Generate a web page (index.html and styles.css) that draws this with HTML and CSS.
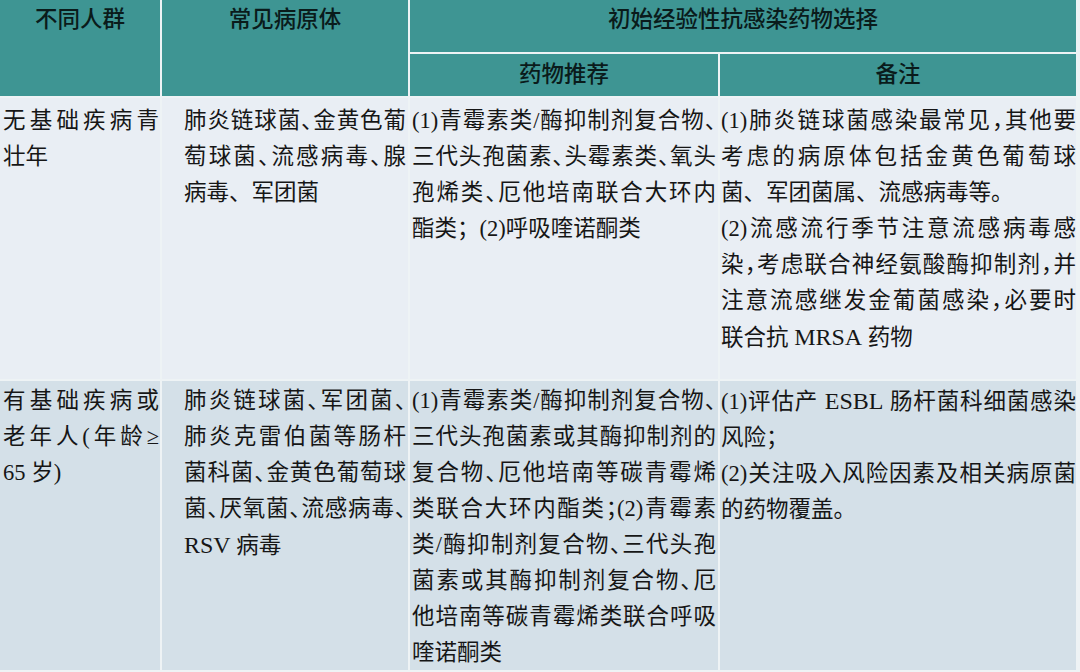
FILE: index.html
```html
<!DOCTYPE html>
<html lang="zh-CN">
<head>
<meta charset="utf-8">
<title>初始经验性抗感染药物选择</title>
<link rel="stylesheet" href="styles.css">
</head>
<body>
<div class="table">
  <div class="cell head h-tall">不同人群</div>
  <div class="cell head h-tall">常见病原体</div>
  <div class="cell head h-wide">初始经验性抗感染药物选择</div>
  <div class="cell head h-sub">药物推荐</div>
  <div class="cell head h-sub">备注</div>

  <div class="cell body r1 c1">
    <div class="l">无基础疾病青</div>
    <div class="l e">壮年</div>
  </div>
  <div class="cell body r1 c2">
    <div class="l">肺炎链球菌、金黄色葡</div>
    <div class="l">萄球菌、流感病毒、腺</div>
    <div class="l e">病毒、军团菌</div>
  </div>
  <div class="cell body r1 c3">
    <div class="l">(1)青霉素类/酶抑制剂复合物、</div>
    <div class="l">三代头孢菌素、头霉素类、氧头</div>
    <div class="l">孢烯类、厄他培南联合大环内</div>
    <div class="l e">酯类；(2)呼吸喹诺酮类</div>
  </div>
  <div class="cell body r1 c4">
    <div class="l">(1)肺炎链球菌感染最常见，其他要</div>
    <div class="l">考虑的病原体包括金黄色葡萄球</div>
    <div class="l e">菌、军团菌属、流感病毒等。</div>
    <div class="l">(2)流感流行季节注意流感病毒感</div>
    <div class="l">染，考虑联合神经氨酸酶抑制剂，并</div>
    <div class="l">注意流感继发金葡菌感染，必要时</div>
    <div class="l e">联合抗 <span class="lat">MRSA</span> 药物</div>
  </div>

  <div class="cell body r2 c1">
    <div class="l">有基础疾病或</div>
    <div class="l">老年人(年龄≥</div>
    <div class="l e">65 岁)</div>
  </div>
  <div class="cell body r2 c2">
    <div class="l">肺炎链球菌、军团菌、</div>
    <div class="l">肺炎克雷伯菌等肠杆</div>
    <div class="l">菌科菌、金黄色葡萄球</div>
    <div class="l">菌、厌氧菌、流感病毒、</div>
    <div class="l e"><span class="lat">RSV</span> 病毒</div>
  </div>
  <div class="cell body r2 c3">
    <div class="l">(1)青霉素类/酶抑制剂复合物、</div>
    <div class="l">三代头孢菌素或其酶抑制剂的</div>
    <div class="l">复合物、厄他培南等碳青霉烯</div>
    <div class="l">类联合大环内酯类；(2)青霉素</div>
    <div class="l">类/酶抑制剂复合物、三代头孢</div>
    <div class="l">菌素或其酶抑制剂复合物、厄</div>
    <div class="l">他培南等碳青霉烯类联合呼吸</div>
    <div class="l e">喹诺酮类</div>
  </div>
  <div class="cell body r2 c4">
    <div class="l">(1)评估产 <span class="lat">ESBL</span> 肠杆菌科细菌感染</div>
    <div class="l e">风险；</div>
    <div class="l">(2)关注吸入风险因素及相关病原菌</div>
    <div class="l e">的药物覆盖。</div>
  </div>
</div>
</body>
</html>
```

FILE: styles.css
```css
* {
  box-sizing: border-box;
}

html,
body {
  margin: 0;
  padding: 0;
}

body {
  width: 1080px;
  height: 672px;
  overflow: hidden;
  background: #eef3f5;
  font-family: "Liberation Serif", "Noto Sans CJK SC", serif;
  font-size: 22.5px;
  color: #161616;
}

.table {
  display: grid;
  grid-template-columns: 160px 246px 308px 356px;
  grid-template-rows: 52px 42px 281px 289px;
  gap: 2px;
}

.head {
  background: #3e9593;
  color: #0a1b1b;
  font-weight: 500;
  text-align: center;
  line-height: 36px;
}

.h-tall {
  grid-row: span 2;
  padding-top: 2px;
}

.h-wide {
  grid-column: span 2;
  padding-top: 2px;
}

.h-sub {
  display: flex;
  align-items: center;
  justify-content: center;
}

.body {
  line-height: 36px;
}

.r1 {
  background: #e9eef4;
  padding-top: 5px;
}

.r2 {
  background: #d4e0e8;
  padding-top: 2px;
}

.c1 {
  padding-left: 3px;
  padding-right: 1px;
}

.c2 {
  padding-left: 22px;
  padding-right: 2px;
}

.c3 {
  padding-left: 2px;
  padding-right: 2px;
}

.c4 {
  padding-left: 1px;
  padding-right: 0;
}

.l {
  text-align: justify;
  text-align-last: justify;
  font-feature-settings: "halt";
}

.l.e {
  text-align: left;
  text-align-last: left;
  font-feature-settings: normal;
}

.lat {
  font-size: 24px;
}
```
